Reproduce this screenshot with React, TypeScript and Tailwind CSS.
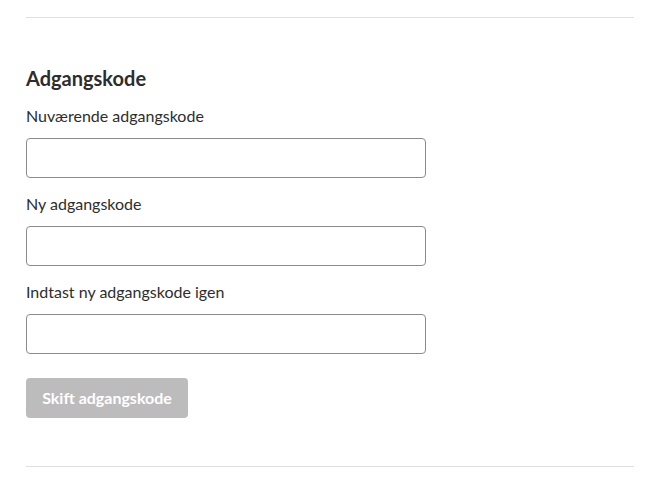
const fields = ["Nuværende adgangskode", "Ny adgangskode", "Indtast ny adgangskode igen"];

export default function App() {
  return (
    <div className="min-h-screen bg-white pl-[26px] pr-[36px] pt-[17px] text-[#2d3b45]" style={{ fontFamily: "Lato, 'Liberation Sans', sans-serif" }}>
      <div className="border-t border-[#e0e0e0]" />

      <section className="mt-[46px]">
        <h2 className="text-[20px] font-bold leading-[28px] text-[#2d2d2d]">Adgangskode</h2>

        <form className="mt-[13px] flex flex-col">
          {fields.map((label, i) => (
            <label key={label} className={i > 0 ? "mt-[15px] block" : "block"}>
              <span className="block text-[16px] leading-[22px] text-[#2d2d2d]">{label}</span>
              <input
                type="password"
                className="mt-[11px] block h-[40px] w-[400px] rounded-[4px] border border-[#8b8b8b] bg-white px-3 outline-none"
              />
            </label>
          ))}

          <button
            type="button"
            disabled
            className="mt-[24px] h-[40px] w-[162px] rounded-[4px] bg-[#bcbcbd] text-[16px] font-bold text-white"
          >
            Skift adgangskode
          </button>
        </form>
      </section>

      <div className="mt-[48px] border-t border-[#e0e0e0]" />
    </div>
  );
}
